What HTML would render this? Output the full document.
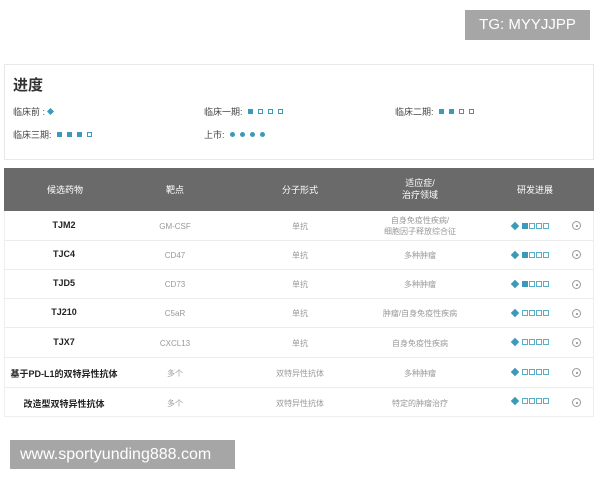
<!DOCTYPE html>
<html><head><meta charset="utf-8"><style>
*{margin:0;padding:0;box-sizing:border-box}
body{width:600px;height:480px;background:#fff;position:relative;font-family:"Liberation Sans","Noto Sans CJK SC",sans-serif;overflow:hidden}
.a{position:absolute}
.tg{left:465px;top:10px;width:125px;height:30px;background:#a6a6a6;color:#fff;font-size:15px;line-height:30px;text-align:center}
.wm{left:10px;top:440px;width:225px;height:29px;background:#a6a6a6;color:#fff;font-size:16px;line-height:29px;padding-left:10px}
.box{left:4px;top:64px;width:590px;height:96px;border:1px solid #e8e8e8}
.t{font-size:15px;font-weight:bold;color:#333}
.l{font-size:9px;color:#444;white-space:nowrap}
.sq{display:inline-block;width:5px;height:5px;background:#3c9ab8;margin-left:5px;vertical-align:1px}
.so{display:inline-block;width:5px;height:5px;border:1px solid #3c9ab8;margin-left:5px;vertical-align:1px}
.ci{display:inline-block;width:5px;height:5px;border-radius:50%;background:#3c9ab8;margin-left:5px;vertical-align:1px}
.di{display:inline-block;width:5px;height:5px;background:#3c9ab8;transform:rotate(45deg);margin-left:3px;vertical-align:1px}
.tbl{left:4px;top:168px;width:590px;height:249px;border:1px solid #eee;border-top:none}
.hd{left:4px;top:168px;width:590px;height:43px;background:#6a6a6a}
.h{color:#fff;font-size:9px;text-align:center;line-height:12px}
.c{font-size:8px;color:#999;text-align:center;line-height:11px}
.b{font-size:9px;font-weight:bold;color:#222;text-align:center}
.rl{left:4px;width:590px;height:1px;background:#ececec}
.pr{font-size:0;white-space:nowrap}
.pr .d{display:inline-block;width:6px;height:6px;background:#3c9ab8;transform:rotate(45deg);margin-right:4px;vertical-align:middle}
.pr .f{display:inline-block;width:6px;height:6px;background:#3c9ab8;margin-right:1px;vertical-align:middle}
.pr .e{display:inline-block;width:6px;height:6px;border:1px solid #5aaec8;margin-right:1px;vertical-align:middle}
.cc{width:9px;height:9px;border:1px solid #999;border-radius:50%}
.cc:after{content:"";position:absolute;left:2.5px;top:2.5px;width:2px;height:2px;background:#888;border-radius:50%}
</style></head><body>
<div class="a tg">TG: MYYJJPP</div>
<div class="a box"></div>
<div class="a t" style="left:13px;top:74px">进度</div>
<div class="a l" style="left:13px;top:105px">临床前 :<span class="di"></span></div>
<div class="a l" style="left:204px;top:105px">临床一期:<span class="sq"></span><span class="so"></span><span class="so"></span><span class="so"></span></div>
<div class="a l" style="left:395px;top:105px">临床二期:<span class="sq"></span><span class="sq"></span><span class="so"></span><span class="so"></span></div>
<div class="a l" style="left:13px;top:128px">临床三期:<span class="sq"></span><span class="sq"></span><span class="sq"></span><span class="so"></span></div>
<div class="a l" style="left:204px;top:128px">上市:<span class="ci"></span><span class="ci"></span><span class="ci"></span><span class="ci"></span></div>

<div class="a tbl"></div>
<div class="a hd"></div>
<div class="a h" style="left:25px;top:184px;width:80px">候选药物</div>
<div class="a h" style="left:135px;top:184px;width:80px">靶点</div>
<div class="a h" style="left:260px;top:184px;width:80px">分子形式</div>
<div class="a h" style="left:380px;top:177px;width:80px">适应症/<br>治疗领域</div>
<div class="a h" style="left:495px;top:184px;width:80px">研发进展</div>

<div class="a rl" style="top:240px"></div>
<div class="a rl" style="top:269px"></div>
<div class="a rl" style="top:298px"></div>
<div class="a rl" style="top:327px"></div>
<div class="a rl" style="top:357px"></div>
<div class="a rl" style="top:387px"></div>

<div class="a b" style="left:4px;top:220px;width:120px">TJM2</div>
<div class="a c" style="left:135px;top:221px;width:80px">GM-CSF</div>
<div class="a c" style="left:260px;top:221px;width:80px">单抗</div>
<div class="a c" style="left:360px;top:215px;width:120px">自身免疫性疾病/<br>细胞因子释放综合征</div>

<div class="a b" style="left:4px;top:249px;width:120px">TJC4</div>
<div class="a c" style="left:135px;top:250px;width:80px">CD47</div>
<div class="a c" style="left:260px;top:250px;width:80px">单抗</div>
<div class="a c" style="left:360px;top:250px;width:120px">多种肿瘤</div>

<div class="a b" style="left:4px;top:278px;width:120px">TJD5</div>
<div class="a c" style="left:135px;top:279px;width:80px">CD73</div>
<div class="a c" style="left:260px;top:279px;width:80px">单抗</div>
<div class="a c" style="left:360px;top:279px;width:120px">多种肿瘤</div>

<div class="a b" style="left:4px;top:307px;width:120px">TJ210</div>
<div class="a c" style="left:135px;top:308px;width:80px">C5aR</div>
<div class="a c" style="left:260px;top:308px;width:80px">单抗</div>
<div class="a c" style="left:360px;top:308px;width:120px">肿瘤/自身免疫性疾病</div>

<div class="a b" style="left:4px;top:337px;width:120px">TJX7</div>
<div class="a c" style="left:135px;top:338px;width:80px">CXCL13</div>
<div class="a c" style="left:260px;top:338px;width:80px">单抗</div>
<div class="a c" style="left:360px;top:338px;width:120px">自身免疫性疾病</div>

<div class="a b" style="left:4px;top:367px;width:120px">基于PD-L1的双特异性抗体</div>
<div class="a c" style="left:135px;top:368px;width:80px">多个</div>
<div class="a c" style="left:260px;top:368px;width:80px">双特异性抗体</div>
<div class="a c" style="left:360px;top:368px;width:120px">多种肿瘤</div>

<div class="a b" style="left:4px;top:397px;width:120px">改造型双特异性抗体</div>
<div class="a c" style="left:135px;top:398px;width:80px">多个</div>
<div class="a c" style="left:260px;top:398px;width:80px">双特异性抗体</div>
<div class="a c" style="left:360px;top:398px;width:120px">特定的肿瘤治疗</div>

<div class="a pr" style="left:512px;top:223px"><i class="d"></i><i class="f"></i><i class="e"></i><i class="e"></i><i class="e"></i></div>
<div class="a pr" style="left:512px;top:252px"><i class="d"></i><i class="f"></i><i class="e"></i><i class="e"></i><i class="e"></i></div>
<div class="a pr" style="left:512px;top:281px"><i class="d"></i><i class="f"></i><i class="e"></i><i class="e"></i><i class="e"></i></div>
<div class="a pr" style="left:512px;top:310px"><i class="d"></i><i class="e"></i><i class="e"></i><i class="e"></i><i class="e"></i></div>
<div class="a pr" style="left:512px;top:339px"><i class="d"></i><i class="e"></i><i class="e"></i><i class="e"></i><i class="e"></i></div>
<div class="a pr" style="left:512px;top:369px"><i class="d"></i><i class="e"></i><i class="e"></i><i class="e"></i><i class="e"></i></div>
<div class="a pr" style="left:512px;top:398px"><i class="d"></i><i class="e"></i><i class="e"></i><i class="e"></i><i class="e"></i></div>

<div class="a cc" style="left:572px;top:221px"></div>
<div class="a cc" style="left:572px;top:250px"></div>
<div class="a cc" style="left:572px;top:280px"></div>
<div class="a cc" style="left:572px;top:309px"></div>
<div class="a cc" style="left:572px;top:338px"></div>
<div class="a cc" style="left:572px;top:368px"></div>
<div class="a cc" style="left:572px;top:398px"></div>

<div class="a wm">www.sportyunding888.com</div>
</body></html>
